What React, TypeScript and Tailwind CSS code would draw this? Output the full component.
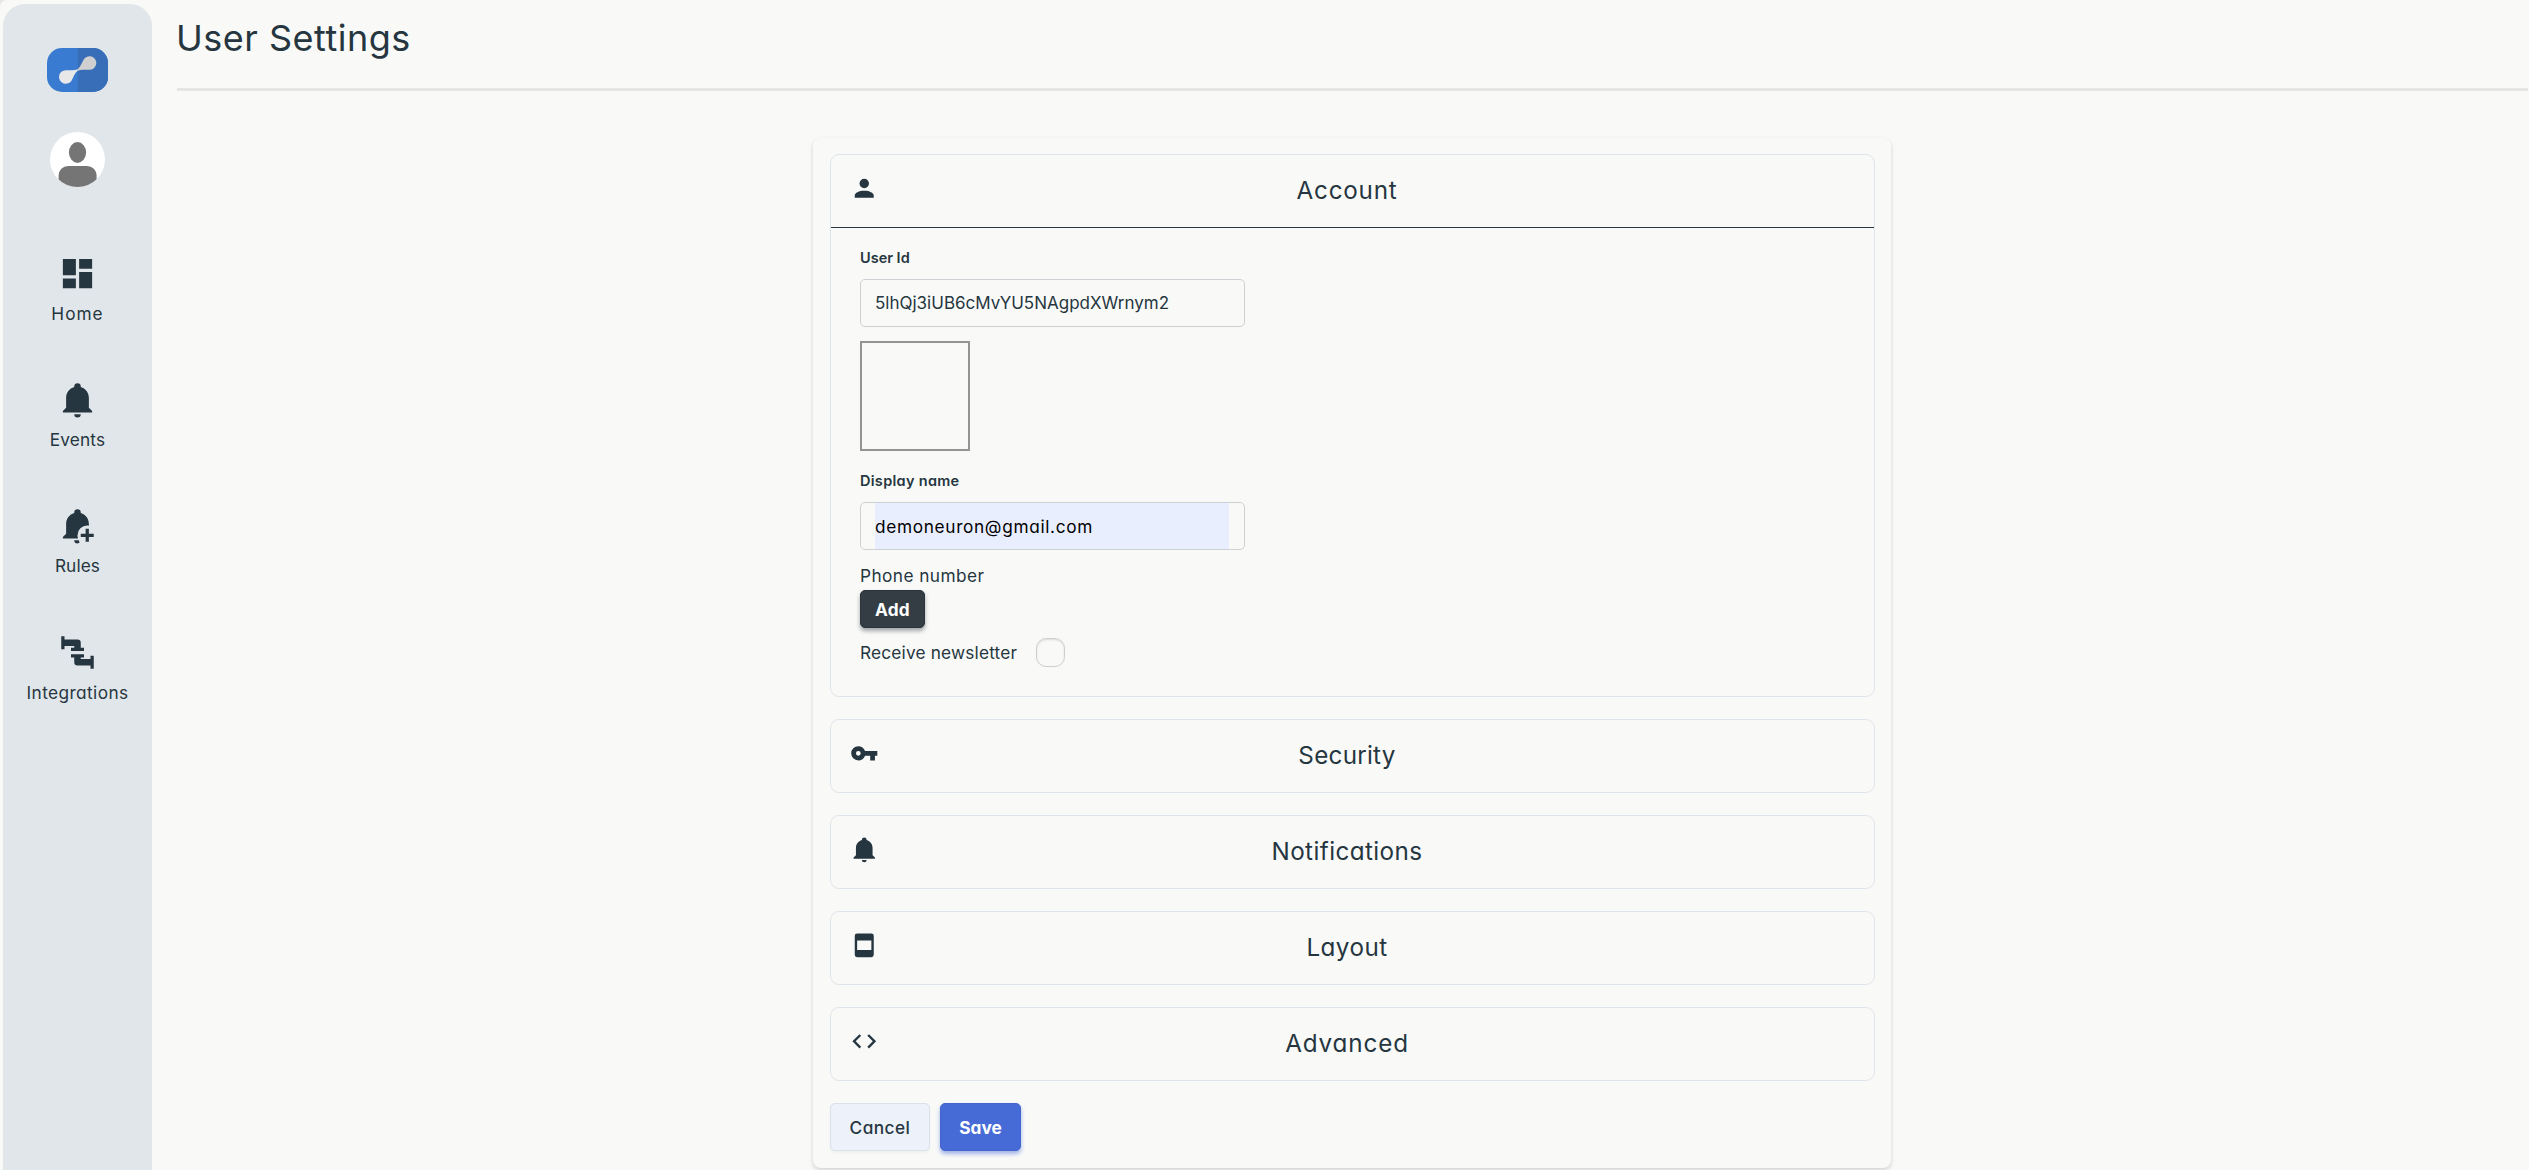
import { useState, type ReactNode } from 'react';
import clsx from 'clsx';

// 24x24 glyphs, shared by the sidebar and the section headers
const icons = {
  dashboard: 'M13,3V9H21V3M13,21H21V11H13M3,21H11V15H3M3,13H11V3H3V13Z',
  bell: 'M21,19V20H3V19L5,17V11C5,7.9 7.03,5.17 10,4.29C10,4.19 10,4.1 10,4A2,2 0 0,1 12,2A2,2 0 0,1 14,4C14,4.1 14,4.19 14,4.29C16.97,5.17 19,7.9 19,11V17L21,19M14,21A2,2 0 0,1 12,23A2,2 0 0,1 10,21H14Z',
  bellPlus:
    'M17,14V17H14V19H17V22H19V19H22V17H19V14H17M12,2A2,2 0 0,0 10,4C10,4.1 10,4.19 10,4.29C7.03,5.17 5,7.9 5,11V17L3,19V20H12.35C12.12,19.36 12,18.68 12,18A6,6 0 0,1 18,12C18.34,12 18.68,12.03 19,12.08V11C19,7.9 16.97,5.17 14,4.29C14,4.19 14,4.1 14,4A2,2 0 0,0 12,2M10,21A2,2 0 0,0 12,23C12.5,23 12.97,22.81 13.33,22.5C13.1,22.03 12.93,21.53 12.8,21H10Z',
  pipe: 'M16,9V11H8V9H10V8H4V10H2V2H4V4H12A2,2 0 0,1 14,6V9H16M10,15V18A2,2 0 0,0 12,20H20V22H22V14H20V16H14V15H16V13H8V15H10Z',
  account:
    'M12,4A4,4 0 0,1 16,8A4,4 0 0,1 12,12A4,4 0 0,1 8,8A4,4 0 0,1 12,4M12,14C16.42,14 20,15.79 20,18V20H4V18C4,15.79 7.58,14 12,14Z',
  key: 'M7,14A2,2 0 0,1 5,12A2,2 0 0,1 7,10A2,2 0 0,1 9,12A2,2 0 0,1 7,14M12.65,10C11.83,7.67 9.61,6 7,6A6,6 0 0,0 1,12A6,6 0 0,0 7,18C9.61,18 11.83,16.33 12.65,14H17V18H21V14H23V10H12.65Z',
  layout:
    'M6,2H18A2,2 0 0,1 20,4V20A2,2 0 0,1 18,22H6A2,2 0 0,1 4,20V4A2,2 0 0,1 6,2M6,8V16H18V8H6Z',
  code: 'M14.6,16.6L19.2,12L14.6,7.4L16,6L22,12L16,18L14.6,16.6M9.4,16.6L4.8,12L9.4,7.4L8,6L2,12L8,18L9.4,16.6Z',
};

type IconName = keyof typeof icons;

function Icon({ name, className }: { name: IconName; className?: string }) {
  return (
    <svg viewBox="0 0 24 24" fill="currentColor" className={clsx('shrink-0', className)}>
      <path fillRule="evenodd" d={icons[name]} />
    </svg>
  );
}

function Logo() {
  return (
    <svg viewBox="0 0 61 44" className="h-11 w-[61px]">
      <rect width="61" height="44" rx="15" fill="#3a7bd2" />
      <path d="M30.7 0H46A15 15 0 0 1 61 15V29A15 15 0 0 1 46 44H30.7Z" fill="#386eb7" />
      <path d="M18.8 22.2C23.5 22.2 28 22.6 30.7 21V22.8C28 25 26.6 28.4 24.8 32.2A6.8 6.8 0 1 1 18.8 22.2Z" fill="#e8e8e8" />
      <path d="M42.5 21.8C37.8 21.8 33.3 21.4 30.7 23V21.2C33.3 19 34.7 15.6 36.5 11.8A6.8 6.8 0 1 1 42.5 21.8Z" fill="#d0d0d0" />
    </svg>
  );
}

function Avatar() {
  return (
    <div className="size-[55px] overflow-hidden rounded-full bg-white">
      <svg viewBox="0 0 55 55" className="size-full" fill="#757575">
        <ellipse cx="27.5" cy="20.5" rx="8.6" ry="10.4" />
        <rect x="8.6" y="34" width="38" height="30" rx="9.5" />
      </svg>
    </div>
  );
}

const nav: { label: string; icon: IconName; tracking: string }[] = [
  { label: 'Home', icon: 'dashboard', tracking: 'tracking-[1px]' },
  { label: 'Events', icon: 'bell', tracking: 'tracking-[0.15px]' },
  { label: 'Rules', icon: 'bellPlus', tracking: 'tracking-[0.1px]' },
  { label: 'Integrations', icon: 'pipe', tracking: 'tracking-[0.4px]' },
];

function Sidebar() {
  return (
    <aside className="mt-1 ml-[3px] flex w-[149px] shrink-0 flex-col items-center rounded-t-[22px] bg-[#e1e6ea] pt-11">
      <Logo />
      <div className="mt-10">
        <Avatar />
      </div>
      <nav className="mt-[66.5px] flex flex-col items-center gap-[54.4px]">
        {nav.map((item) => (
          <a key={item.label} className="flex flex-col items-center gap-2">
            <Icon name={item.icon} className="size-[39px]" />
            <span className={clsx('text-[17.25px] leading-[25px]', item.tracking)}>{item.label}</span>
          </a>
        ))}
      </nav>
    </aside>
  );
}

type SectionProps = {
  title: string;
  icon: IconName;
  tracking: string;
  open?: boolean;
  onToggle: () => void;
  children?: ReactNode;
};

function Section({ title, icon, tracking, open, onToggle, children }: SectionProps) {
  return (
    <section className="rounded-[9px] border border-[#dfe5ec]">
      <button
        type="button"
        onClick={onToggle}
        className={clsx(
          'flex w-full items-center pr-[58px] pl-[18.5px]',
          open ? 'h-[73px] border-b border-[#2a363f]' : 'h-[72px]',
        )}
      >
        <Icon name={icon} className="mb-[6.5px] size-[28.5px]" />
        <span className={clsx('flex-1 text-center text-[24.25px] leading-9', tracking)}>{title}</span>
      </button>
      {open && children}
    </section>
  );
}

function AccountForm() {
  const [name, setName] = useState('demoneuron@gmail.com');
  const [newsletter, setNewsletter] = useState(false);

  return (
    <div className="flex h-[468px] flex-col items-start pt-[17px] pl-[29px]">
      <label className="text-[14.5px] leading-[25px] font-semibold">User Id</label>
      <div className="mt-[9px] h-12 w-[385px] rounded-[5px] border border-[#cdd1d3] px-3.5 text-[17px] leading-[47px]">
        5lhQj3iUB6cMvYU5NAgpdXWrnym2
      </div>
      <div className="mt-3.5 size-[110px] border-2 border-[#949494]" />
      <label className="mt-[17px] text-[14.5px] leading-[25px] font-semibold tracking-[0.3px]">Display name</label>
      <div className="mt-[9px] flex h-12 w-[385px] rounded-[5px] border border-[#cdd1d3] pr-[15px] pl-3.5">
        <input
          value={name}
          onChange={(e) => setName(e.target.value)}
          className="h-full w-full bg-[#e8eefe] text-[17.25px] tracking-[0.66px] text-black outline-none"
        />
      </div>
      <span className="mt-3.5 text-[17.25px] leading-6 tracking-[0.42px]">Phone number</span>
      <button
        type="button"
        className="mt-0.5 h-[38px] w-[65px] rounded-[5px] border border-[#2b343b] bg-[#343c44] text-[17.25px] leading-[35px] font-bold tracking-[0.2px] text-white shadow-[0_3px_4px_rgba(52,60,68,0.45)]"
      >
        Add
      </button>
      <label className="mt-2.5 flex h-[29px] items-center text-[17.25px] tracking-[0.18px]">
        Receive newsletter
        <input
          type="checkbox"
          checked={newsletter}
          onChange={(e) => setNewsletter(e.target.checked)}
          className="ml-[19px] size-[29px] appearance-none rounded-[10px] border border-[#cfcfcf] shadow-[inset_0_1px_2px_rgba(0,0,0,0.12)] checked:bg-[#476bd6]"
        />
      </label>
    </div>
  );
}

const sections: { title: string; icon: IconName; tracking: string; body?: ReactNode }[] = [
  { title: 'Account', icon: 'account', tracking: 'tracking-[0.75px]', body: <AccountForm /> },
  { title: 'Security', icon: 'key', tracking: 'tracking-[0.25px]' },
  { title: 'Notifications', icon: 'bell', tracking: 'tracking-[0.42px]' },
  { title: 'Layout', icon: 'layout', tracking: 'tracking-[0.45px]' },
  { title: 'Advanced', icon: 'code', tracking: 'tracking-[0.85px]' },
];

export default function App() {
  const [openSection, setOpenSection] = useState<string | null>('Account');

  return (
    <div className="h-screen overflow-hidden bg-[#e6e6e6]">
      <div className="flex h-full rounded-tl-[7px] bg-[#f9faf8] font-['Inter',sans-serif] text-[#263640] [font-feature-settings:'cv11']">
        <Sidebar />
        <main className="ml-[25px] flex flex-1 flex-col pr-px">
          <h1 className="-indent-px flex h-[91px] items-start border-b-3 border-[#e5e5e5] text-[36px] leading-[77px] tracking-[0.5px]">
            User Settings
          </h1>
          <div className="mt-[47px] ml-[636px] h-[1030px] w-[1078px] rounded-[8px] bg-[#f9faf8] pt-4 pr-4 pl-[17px] shadow-[0_2px_4px_rgba(0,0,0,0.16)]">
            <div className="flex flex-col gap-[22px]">
              {sections.map((s) => (
                <Section
                  key={s.title}
                  title={s.title}
                  icon={s.icon}
                  tracking={s.tracking}
                  open={openSection === s.title && !!s.body}
                  onToggle={() => setOpenSection(openSection === s.title ? null : s.title)}
                >
                  {s.body}
                </Section>
              ))}
            </div>
            <div className="mt-[22px] flex gap-2.5">
              <button
                type="button"
                className="h-12 w-[100px] rounded-[5px] border border-[#dbe1e8] bg-[#edf2fa] pt-px text-[17.25px] font-[550] tracking-[0.45px] shadow-[0_2px_3px_rgba(0,0,0,0.04)]"
              >
                Cancel
              </button>
              <button
                type="button"
                className="h-12 w-[81px] rounded-[5px] border border-[#4365cc] bg-[#476bd6] pt-px text-[17.25px] font-bold text-white shadow-[0_3px_4px_rgba(71,107,214,0.5)]"
              >
                Save
              </button>
            </div>
          </div>
        </main>
      </div>
    </div>
  );
}
